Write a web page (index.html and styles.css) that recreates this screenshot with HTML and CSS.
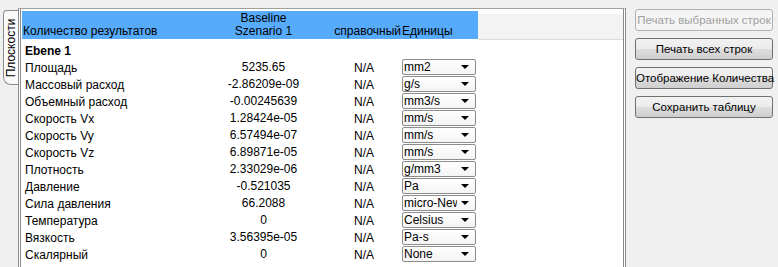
FILE: index.html
```html
<!DOCTYPE html>
<html>
<head>
  <title>Количество результатов</title>
  <meta charset="UTF-8">
  <link rel="stylesheet" href="styles.css">
</head>
<body>
  <div class="tabs">
    <div class="tab"><span>Плоскости</span></div>
  </div>
  <div class="frame">
    <div class="head">
      <div class="hcols">
        <div class="c-name">Количество результатов</div>
        <div class="c-val">Baseline<br>Szenario 1</div>
        <div class="c-ref">справочный</div>
        <div class="c-unit">Единицы</div>
      </div>
      <div class="hrest"></div>
    </div>
    <div class="rows">
      <div class="row group"><div class="c-name">Ebene 1</div></div>
      <div class="row"><div class="c-name">Площадь</div><div class="c-val">5235.65</div><div class="c-ref">N/A</div><div class="c-unit"><div class="combo"><span>mm2</span></div></div></div>
      <div class="row"><div class="c-name">Массовый расход</div><div class="c-val">-2.86209e-09</div><div class="c-ref">N/A</div><div class="c-unit"><div class="combo"><span>g/s</span></div></div></div>
      <div class="row"><div class="c-name">Объемный расход</div><div class="c-val">-0.00245639</div><div class="c-ref">N/A</div><div class="c-unit"><div class="combo"><span>mm3/s</span></div></div></div>
      <div class="row"><div class="c-name">Скорость Vx</div><div class="c-val">1.28424e-05</div><div class="c-ref">N/A</div><div class="c-unit"><div class="combo"><span>mm/s</span></div></div></div>
      <div class="row"><div class="c-name">Скорость Vy</div><div class="c-val">6.57494e-07</div><div class="c-ref">N/A</div><div class="c-unit"><div class="combo"><span>mm/s</span></div></div></div>
      <div class="row"><div class="c-name">Скорость Vz</div><div class="c-val">6.89871e-05</div><div class="c-ref">N/A</div><div class="c-unit"><div class="combo"><span>mm/s</span></div></div></div>
      <div class="row"><div class="c-name">Плотность</div><div class="c-val">2.33029e-06</div><div class="c-ref">N/A</div><div class="c-unit"><div class="combo"><span>g/mm3</span></div></div></div>
      <div class="row"><div class="c-name">Давление</div><div class="c-val">-0.521035</div><div class="c-ref">N/A</div><div class="c-unit"><div class="combo"><span>Pa</span></div></div></div>
      <div class="row"><div class="c-name">Сила давления</div><div class="c-val">66.2088</div><div class="c-ref">N/A</div><div class="c-unit"><div class="combo"><span>micro-Newton</span></div></div></div>
      <div class="row"><div class="c-name">Температура</div><div class="c-val">0</div><div class="c-ref">N/A</div><div class="c-unit"><div class="combo"><span>Celsius</span></div></div></div>
      <div class="row"><div class="c-name">Вязкость</div><div class="c-val">3.56395e-05</div><div class="c-ref">N/A</div><div class="c-unit"><div class="combo"><span>Pa-s</span></div></div></div>
      <div class="row"><div class="c-name">Скалярный</div><div class="c-val">0</div><div class="c-ref">N/A</div><div class="c-unit"><div class="combo"><span>None</span></div></div></div>
    </div>
  </div>
  <div class="buttons">
    <button class="btn" disabled>Печать выбранных строк</button>
    <button class="btn">Печать всех строк</button>
    <button class="btn">Отображение Количества</button>
    <button class="btn">Сохранить таблицу</button>
  </div>
</body>
</html>
```

FILE: styles.css
```css
html{overflow:hidden;}
body{
  margin:0;
  background:#f0f0f0;
  font-family:"Liberation Sans", Arial, sans-serif;
  font-size:12px;
  color:#000;
  display:flex;
  align-items:flex-start;
  height:267px;
  overflow:hidden;
}
.tabs{
  width:18px;
  padding-top:10px;
  padding-left:3px;
  box-sizing:border-box;
}
.tab{
  width:15px;
  height:75px;
  border:1px solid #8a8a8a;
  border-right:none;
  border-radius:4px 0 0 8px;
  background:#fafafa;
  box-sizing:border-box;
  display:flex;
  align-items:center;
  justify-content:center;
}
.tab span{
  transform:rotate(-90deg);
  white-space:nowrap;
}
.frame{
  margin-top:8px;
  width:608px;
  height:259px;
  border:1px solid #a0a0a0;
  border-bottom:none;
  border-right:3px double #8a8a90;
  border-left:3px double #8a8a90;
  box-sizing:border-box;
  padding:2px 0 0 1px;
  background:#fff;
}
.head{
  display:flex;
  height:28px;
}
.hcols{
  display:flex;
  align-items:flex-end;
  background:#56abfd;
  width:456px;
  padding-bottom:1px;
  box-sizing:border-box;
}
.hrest{
  flex:1;
  background:#f3f3f3;
  border-top:1px solid #fff;
  border-bottom:1px solid #dcdcdc;
  margin-top:2px;
  margin-bottom:-1px;
}
.c-name{width:179px; padding-left:1px; box-sizing:border-box;}
.c-val{width:125px; text-align:center; line-height:13px;}
.c-ref{width:76px; text-align:center;}
.c-unit{width:76px;}
.hcols .c-ref{text-align:right; padding-right:1px; box-sizing:border-box;}
.rows{padding-top:3px;}
.row{
  display:flex;
  height:17px;
  align-items:center;
  width:456px;
}
.row .c-name{padding-left:3px;}
.group .c-name{font-weight:bold;}
.combo{
  display:flex;
  align-items:center;
  height:16px;
  width:74px;
  margin-top:-1px;
  border:1px solid #8d8d8d;
  border-radius:2px;
  background:linear-gradient(#fff,#f4f4f4);
  box-sizing:border-box;
  padding-left:1px;
}
.combo span{
  flex:1;
  overflow:hidden;
  white-space:nowrap;
  line-height:14px;
}
.combo::after{
  content:"";
  flex:none;
  margin:0 6px 0 4px;
  border-left:4px solid transparent;
  border-right:4px solid transparent;
  border-top:4px solid #000;
}
.buttons{
  margin-left:9px;
  padding-top:9px;
  display:flex;
  flex-direction:column;
  gap:7px;
}
.btn{
  width:138px;
  height:22px;
  font:inherit;
  font-size:11.5px;
  color:#000;
  border:1px solid #707070;
  border-radius:3px;
  background:linear-gradient(#f2f2f2 0,#ebebeb 50%,#dddddd 51%,#cfcfcf 100%);
  padding:0;
  white-space:nowrap;
}
.btn:disabled{
  color:#a0a0a0;
  border-color:#adb2b5;
  background:#f4f4f4;
}
```
